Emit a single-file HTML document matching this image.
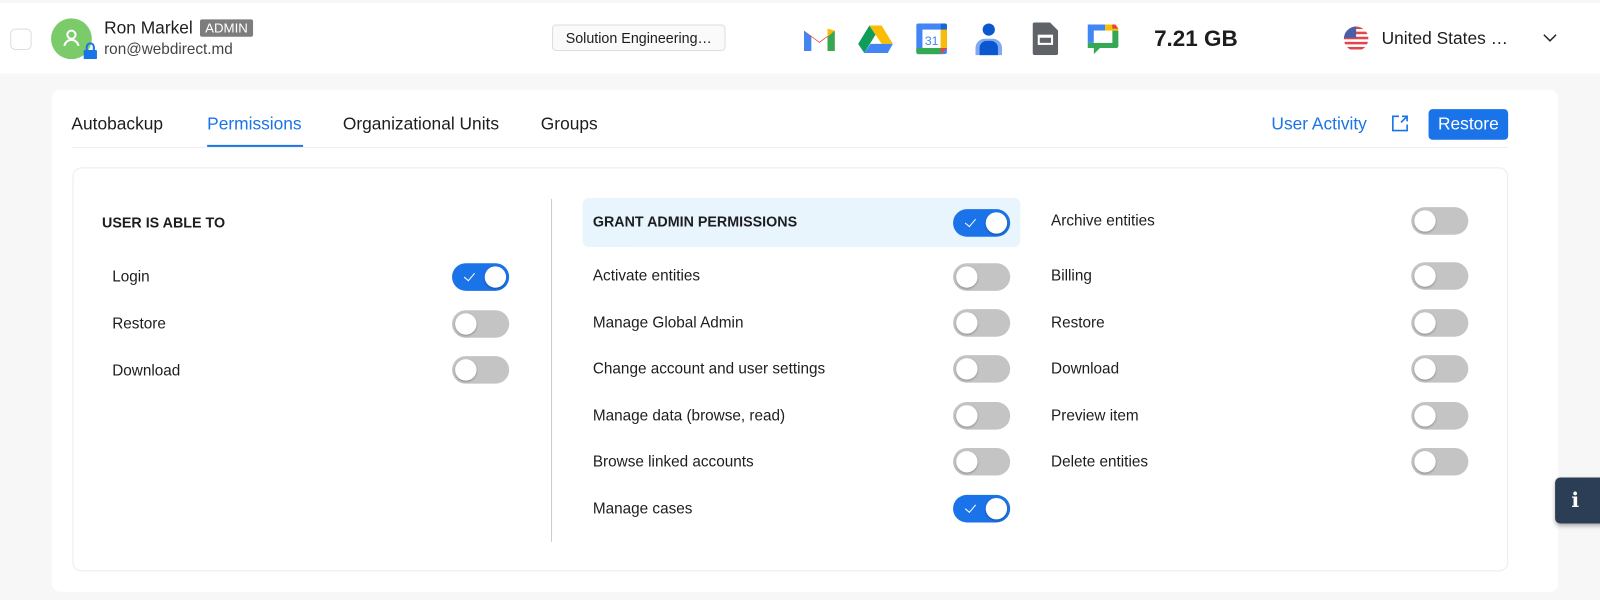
<!DOCTYPE html>
<html><head><meta charset="utf-8"><style>
*{box-sizing:border-box;margin:0;padding:0}
body{width:1600px;height:600px;background:#f7f7f7;font-family:"Liberation Sans",Arial,sans-serif;color:#1d1d1f;position:relative;overflow:hidden}
#w{position:absolute;left:0;top:0;width:1568px;height:588px;transform:scale(1.0204);transform-origin:0 0}
.abs{position:absolute}
.hdr{left:0;top:3px;width:1580px;height:69px;background:#fff}
.card{left:51px;top:88px;width:1476px;height:492px;background:#fff;border-radius:8px}
.panel{left:71px;top:164px;width:1407px;height:396px;border:1px solid #ececec;border-radius:9px}
.tg{position:absolute;width:56px;height:27px;border-radius:14px;background:#c4c4c4}
.tg::after{content:"";position:absolute;left:3px;top:3px;width:21px;height:21px;border-radius:50%;background:#fff;box-shadow:0 1px 2px rgba(0,0,0,.3)}
.tg.on{background:#1a73e8}
.tg.on::after{left:32px}
.tg.on::before{content:"";position:absolute;left:14px;top:7px;width:5px;height:9px;border:solid #fff;border-width:0 1.5px 1.5px 0;transform:rotate(40deg)}
.lb{position:absolute;font-size:15px;color:#1d1d1f}
.tab{position:absolute;top:112px;font-size:17px;color:#1d1d1f}
</style></head><body><div id="w">
<div class="abs hdr"></div>
<div class="abs" style="left:10px;top:28px;width:21px;height:21px;border:1px solid #ddd;border-radius:5px"></div>
<div class="abs" style="left:50px;top:18px;width:40px;height:40px;border-radius:50%;background:#7ccb6a"></div>
<svg class="abs" style="left:58px;top:25px" width="24" height="24" viewBox="0 0 24 24" fill="none" stroke="#fff" stroke-width="2"><circle cx="12" cy="9" r="4"/><path d="M5 20c1-4 4-6 7-6s6 2 7 6"/></svg>
<svg class="abs" style="left:81px;top:41px" width="15" height="17" viewBox="0 0 15 17"><path d="M4 8V5a3.5 3.5 0 0 1 7 0v3" stroke="#1a73e8" stroke-width="2" fill="none"/><rect x="1" y="8" width="13" height="9" rx="1" fill="#1a73e8"/></svg>
<div class="abs" style="left:102px;top:18px;font-size:17px">Ron Markel</div>
<div class="abs" style="left:196px;top:19px;background:#7d7d7d;color:#fff;font-size:13px;padding:1px 5px;border-radius:2px">ADMIN</div>
<div class="abs" style="left:102px;top:40px;font-size:15px;color:#444">ron@webdirect.md</div>
<div class="abs" style="left:541px;top:24px;width:170px;height:26px;border:1px solid #ddd;border-radius:4px;font-size:14px;line-height:24px;text-align:center;background:#fafafa">Solution Engineering…</div>
<svg class="abs" style="left:786px;top:24px" width="34" height="28" viewBox="0 0 34 28"><path d="M2 6v20h7V12l8 6 8-6v14h7V6l-15 11z" fill="#ea4335"/><path d="M2 6v20h7V12z" fill="#4285f4"/><path d="M25 12v14h7V6z" fill="#34a853"/><path d="M32 6l-7 6V4z" fill="#fbbc04"/></svg>
<svg class="abs" style="left:840px;top:23px" width="36" height="30" viewBox="0 0 36 30"><path d="M12 2h12l11 18H24z" fill="#fbbc04"/><path d="M12 2L1 20l6 9 11-18z" fill="#0f9d58"/><path d="M7 29h23l5-9H13z" fill="#4285f4"/></svg>
<svg class="abs" style="left:897px;top:22px" width="32" height="32" viewBox="0 0 32 32"><rect x="1" y="1" width="30" height="30" rx="2" fill="#4285f4"/><rect x="7" y="7" width="18" height="18" fill="#fff"/><path d="M25 1h4a2 2 0 0 1 2 2v4h-6z" fill="#1967d2"/><path d="M25 7h6v18h-6z" fill="#fbbc04"/><path d="M1 25h24v6H3a2 2 0 0 1-2-2z" fill="#34a853"/><path d="M25 25h6l-6 6z" fill="#ea4335"/><text x="16" y="22" font-size="12" text-anchor="middle" fill="#4285f4" font-family="Liberation Sans">31</text></svg>
<svg class="abs" style="left:954px;top:21px" width="30" height="34" viewBox="0 0 30 34"><circle cx="15" cy="8" r="6" fill="#0b57d0"/><path d="M2 33v-7a9 9 0 0 1 9-9h8a9 9 0 0 1 9 9v7z" fill="#7fa9f0"/><path d="M6 33v-7a7 7 0 0 1 7-7h4a7 7 0 0 1 7 7v7z" fill="#0b57d0"/></svg>
<svg class="abs" style="left:1012px;top:22px" width="25" height="32" viewBox="0 0 25 32"><path d="M2 0h15l8 8v22a2 2 0 0 1-2 2H2a2 2 0 0 1-2-2V2a2 2 0 0 1 2-2z" fill="#5f6368"/><rect x="6" y="13" width="13" height="8" fill="none" stroke="#fff" stroke-width="2"/><rect x="6" y="13" width="13" height="2" fill="#fff"/></svg>
<svg class="abs" style="left:1065px;top:22px" width="32" height="32" viewBox="0 0 32 32"><path d="M1 2h17v6H7v12H1z" fill="#4285f4"/><path d="M18 2h10l3 4v2H18z" fill="#fbbc04"/><path d="M25 2h3l3 4h-6z" fill="#ea4335"/><path d="M25 8h6v15a2 2 0 0 1-2 2H13l-6 6v-6H1v-5h24z" fill="#34a853"/><rect x="7" y="8" width="18" height="12" fill="#fff"/></svg>
<div class="abs" style="left:1131px;top:25px;font-size:22px;font-weight:bold;color:#1d1d1f">7.21 GB</div>
<svg class="abs" style="left:1316px;top:25px" width="26" height="26" viewBox="0 0 26 26"><defs><clipPath id="c"><circle cx="13" cy="13" r="12"/></clipPath></defs><g clip-path="url(#c)"><rect width="26" height="26" fill="#fff"/><g fill="#e0474c"><rect y="1" width="26" height="2.5"/><rect y="6" width="26" height="2.5"/><rect y="11" width="26" height="2.5"/><rect y="16" width="26" height="2.5"/><rect y="21" width="26" height="2.5"/></g><rect width="13" height="12" fill="#4a5fa8"/></g></svg>
<div class="abs" style="left:1354px;top:28px;font-size:17px">United States …</div>
<svg class="abs" style="left:1511px;top:31px" width="16" height="12" viewBox="0 0 16 12"><path d="M2 3l6 6 6-6" stroke="#222" stroke-width="1.4" fill="none"/></svg>

<div class="abs card"></div>
<div class="tab" style="left:70px">Autobackup</div>
<div class="tab" style="left:203px;color:#1a73e8">Permissions</div>
<div class="abs" style="left:203px;top:142px;width:94px;height:2px;background:#1a73e8"></div>
<div class="tab" style="left:336px">Organizational Units</div>
<div class="tab" style="left:530px">Groups</div>
<div class="abs" style="left:71px;top:144px;width:1407px;height:1px;background:#f0f0f0"></div>
<div class="tab" style="left:1246px;color:#1a73e8">User Activity</div>
<svg class="abs" style="left:1362px;top:111px" width="20" height="20" viewBox="0 0 20 20" fill="none" stroke="#1a73e8" stroke-width="1.6"><path d="M9 3H3v14h14v-6"/><path d="M11 9l6-6M12 3h5v5"/></svg>
<div class="abs" style="left:1400px;top:107px;width:78px;height:30px;background:#1a73e8;border-radius:4px;color:#fff;font-size:17px;line-height:30px;text-align:center">Restore</div>

<div class="abs panel"></div>
<div class="abs" style="left:540px;top:195px;width:1px;height:336px;background:#ccc"></div>
<div class="abs" style="left:571px;top:194px;width:429px;height:48px;background:#e8f5fd;border-radius:6px"></div>

<div class="lb" style="left:100px;top:210px;font-weight:bold;font-size:14px">USER IS ABLE TO</div>
<div class="lb" style="left:110px;top:263px">Login</div><div class="tg on" style="left:443px;top:258px"></div>
<div class="lb" style="left:110px;top:309px">Restore</div><div class="tg" style="left:443px;top:304px"></div>
<div class="lb" style="left:110px;top:355px">Download</div><div class="tg" style="left:443px;top:349px"></div>

<div class="lb" style="left:581px;top:209px;font-weight:bold;font-size:14px">GRANT ADMIN PERMISSIONS</div><div class="tg on" style="left:934px;top:205px"></div>
<div class="lb" style="left:581px;top:262px">Activate entities</div><div class="tg" style="left:934px;top:258px"></div>
<div class="lb" style="left:581px;top:308px">Manage Global Admin</div><div class="tg" style="left:934px;top:303px"></div>
<div class="lb" style="left:581px;top:353px">Change account and user settings</div><div class="tg" style="left:934px;top:348px"></div>
<div class="lb" style="left:581px;top:399px">Manage data (browse, read)</div><div class="tg" style="left:934px;top:394px"></div>
<div class="lb" style="left:581px;top:444px">Browse linked accounts</div><div class="tg" style="left:934px;top:439px"></div>
<div class="lb" style="left:581px;top:490px">Manage cases</div><div class="tg on" style="left:934px;top:485px"></div>

<div class="lb" style="left:1030px;top:208px">Archive entities</div><div class="tg" style="left:1383px;top:203px"></div>
<div class="lb" style="left:1030px;top:262px">Billing</div><div class="tg" style="left:1383px;top:257px"></div>
<div class="lb" style="left:1030px;top:308px">Restore</div><div class="tg" style="left:1383px;top:303px"></div>
<div class="lb" style="left:1030px;top:353px">Download</div><div class="tg" style="left:1383px;top:348px"></div>
<div class="lb" style="left:1030px;top:399px">Preview item</div><div class="tg" style="left:1383px;top:394px"></div>
<div class="lb" style="left:1030px;top:444px">Delete entities</div><div class="tg" style="left:1383px;top:439px"></div>

<div class="abs" style="left:1524px;top:468px;width:50px;height:45px;background:#2c3e55;border-radius:5px;box-shadow:0 2px 4px rgba(0,0,0,.3);color:#fff;font-family:'DejaVu Serif',serif;font-weight:bold;font-size:20px;line-height:45px;padding-left:16px">i</div>
</div></body></html>
